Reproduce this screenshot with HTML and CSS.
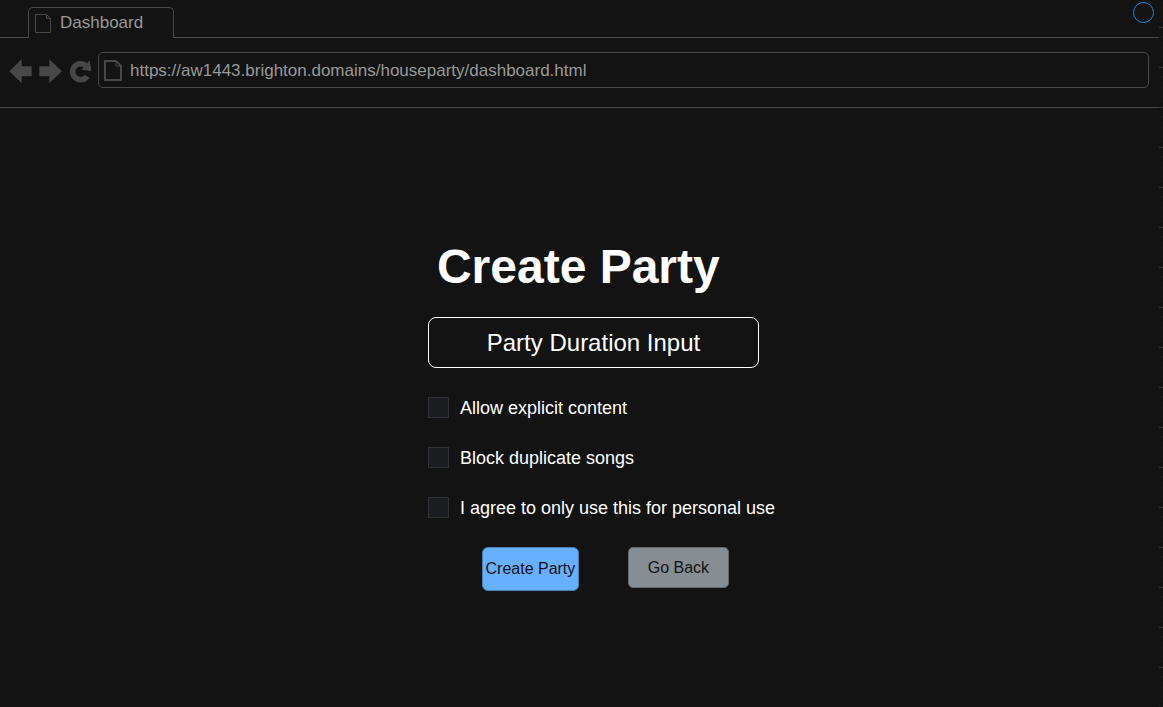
FILE: index.html
```html
<!DOCTYPE html>
<html lang="en">
<head>
<meta charset="utf-8">
<title>Dashboard</title>
<link rel="stylesheet" href="styles.css">
</head>
<body>
<div class="window">
  <header class="browser">
    <div class="tabs">
      <div class="tab">
        <svg class="tab-icon" width="16" height="19" viewBox="0 0 16 19" fill="none" stroke="currentColor"><path d="M.5.5h11l4 4v14H.5zM11.5.5v4h4"/></svg>
        <span>Dashboard</span>
      </div>
      <svg class="status" width="22" height="22" viewBox="0 0 22 22" fill="none" stroke="currentColor"><circle cx="10.500" cy="10.500" r="10"/></svg>
    </div>
    <div class="toolbar">
      <button class="nav" type="button" aria-label="Back"><svg width="24" height="26" viewBox="0 0 24 26" fill="currentColor"><path d="M.3 13.300 12.700 1.300v7h10v10h-10v7z"/></svg></button>
      <button class="nav" type="button" aria-label="Forward"><svg width="24" height="26" viewBox="0 0 24 26" fill="currentColor"><path d="M23 13.300 10.300 1.300v7h-10v10h10v7z"/></svg></button>
      <button class="nav" type="button" aria-label="Reload"><svg width="23" height="26" viewBox="0 0 23 26"><path d="M17 7.700A8 8 0 1 0 18.200 18.300" fill="none" stroke="currentColor" stroke-width="5.500"/><path d="M20.500 2.500 22.500 13 12.500 11.800z" fill="currentColor"/></svg></button>
      <label class="address">
        <svg width="18" height="21" viewBox="0 0 18 21" fill="none" stroke="currentColor" stroke-width="2"><path d="M1 1h11l5 5v14H1z"/><path d="M12 1v5h5" stroke-width="1"/></svg>
        <input class="url" type="text" aria-label="Address" value="https://aw1443.brighton.domains/houseparty/dashboard.html">
      </label>
    </div>
  </header>
  <main class="page">
    <form class="party">
      <h1 class="title">Create Party</h1>
      <input class="duration" type="text" aria-label="Party Duration Input" placeholder="Party Duration Input">
      <div class="options">
        <label class="option"><input class="check" type="checkbox">Allow explicit content</label>
        <label class="option"><input class="check" type="checkbox">Block duplicate songs</label>
        <label class="option"><input class="check" type="checkbox">I agree to only use this for personal use</label>
      </div>
      <div class="actions">
        <button class="btn create" type="button">Create Party</button>
        <button class="btn back" type="button">Go Back</button>
      </div>
    </form>
  </main>
  <div class="ruler"></div>
</div>
</body>
</html>
```
FILE: styles.css
```css
* { box-sizing: border-box; }
body {
  margin: 0;
  background: #131313;
  color: #fff;
  font-family: "Liberation Sans", Arial, sans-serif;
}
button, input { font: inherit; color: inherit; margin: 0; }
svg { display: block; flex: none; }
.window {
  position: relative;
  display: flex;
  flex-direction: column;
  min-height: 100vh;
}
.browser {
  margin-right: 4px;
  border-bottom: 1px solid #484848;
  color: #484848;
}
.tabs {
  display: flex;
  align-items: flex-start;
  justify-content: space-between;
  height: 38px;
  padding: 0 4px 0 28px;
  box-shadow: inset 0 -1px #484848;
}
.tab {
  display: flex;
  gap: 9px;
  height: 31px;
  margin-top: 7px;
  padding: 0 30px 0 6px;
  border: 1px solid #484848;
  border-bottom: 0;
  border-radius: 5px 5px 0 0;
  background: #131313;
  color: #999;
  font-size: 17px;
  line-height: 29px;
}
.tab-icon { margin-top: 6px; color: #484848; }
.status { margin-top: 2px; color: #1e88e0; }
.toolbar {
  display: flex;
  align-items: center;
  gap: 6px;
  padding: 14px 10px 19px 9px;
}
.nav {
  padding: 2px 0 0;
  border: 0;
  background: none;
  color: #484848;
}
.address {
  display: flex;
  flex: 1;
  align-items: center;
  gap: 8px;
  height: 36px;
  padding: 0 6px 0 5px;
  border: 1px solid #484848;
  border-radius: 5px;
}
.url {
  flex: 1;
  padding: 2px 0 0;
  border: 0;
  outline: 0;
  background: none;
  color: #999;
  font-size: 17px;
}
.page {
  display: flex;
  flex: 1;
  align-items: center;
  justify-content: center;
  padding: 16px 0 0 40px;
}
.party { display: flex; flex-direction: column; }
.title {
  margin: 0 0 23px;
  padding-left: 9px;
  font-size: 48px;
  line-height: 54px;
}
.duration {
  height: 51px;
  margin-right: 16px;
  border: 1px solid #fff;
  border-radius: 8px;
  background: none;
  font-size: 24px;
  text-align: center;
}
.duration::placeholder { color: #fff; opacity: 1; }
.options {
  display: flex;
  flex-direction: column;
  gap: 27px;
  margin: 29px 0 27px;
}
.option {
  display: flex;
  align-items: flex-start;
  gap: 11px;
  font-size: 18px;
  line-height: 23px;
}
.check {
  appearance: none;
  width: 21px;
  height: 21px;
  border: 1px solid #303135;
  background: #1c1d21;
}
.check:checked { background: #66b0ff; }
.actions {
  display: flex;
  align-items: flex-start;
  gap: 49px;
  padding-left: 54px;
}
.btn {
  padding: 0;
  border: 1px solid;
  color: #131313;
  font-size: 16px;
}
.create {
  width: 97px;
  height: 44px;
  border-color: #4b80b8;
  border-radius: 6px;
  background: #66b0ff;
}
.back {
  width: 101px;
  height: 41px;
  border-color: #656a6e;
  border-radius: 5px;
  background: #868e93;
}
.ruler {
  position: absolute;
  top: 0;
  right: 0;
  bottom: 0;
  width: 4px;
  background: repeating-linear-gradient(transparent 0 27px, #343434 27px 28px, transparent 28px 40px), repeating-linear-gradient(transparent 0 6px, #181818 6px 8px, transparent 8px 10px);
}
```
